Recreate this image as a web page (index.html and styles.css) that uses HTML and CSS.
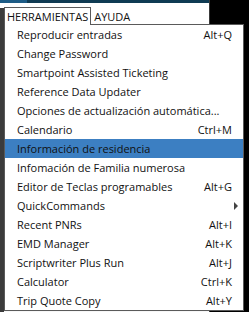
FILE: index.html
```html
<!DOCTYPE html>
<html>
<head>
<meta charset="utf-8">
<link rel="stylesheet" href="styles.css">
</head>
<body>
<div class="window">
  <div class="titlebar"><div class="titlebar-accent"></div></div>
  <div class="content">
    <div class="left-strip"></div>
    <div class="area">
      <div class="menubar">
        <div class="menu-title open">HERRAMIENTAS</div>
        <div class="menu-title">AYUDA</div>
      </div>
    </div>
  </div>
</div>
<div class="dropdown">
  <div class="item"><span>Reproducir entradas</span><span class="key">Alt+Q</span></div>
  <div class="item"><span>Change Password</span></div>
  <div class="item"><span>Smartpoint Assisted Ticketing</span></div>
  <div class="item"><span>Reference Data Updater</span></div>
  <div class="item"><span>Opciones de actualización automática...</span></div>
  <div class="item"><span>Calendario</span><span class="key">Ctrl+M</span></div>
  <div class="item active"><span>Información de residencia</span></div>
  <div class="item"><span>Infomación de Familia numerosa</span></div>
  <div class="item"><span>Editor de Teclas programables</span><span class="key">Alt+G</span></div>
  <div class="item"><span>QuickCommands</span><span class="arrow"></span></div>
  <div class="item"><span>Recent PNRs</span><span class="key">Alt+I</span></div>
  <div class="item"><span>EMD Manager</span><span class="key">Alt+K</span></div>
  <div class="item"><span>Scriptwriter Plus Run</span><span class="key">Alt+J</span></div>
  <div class="item"><span>Calculator</span><span class="key">Ctrl+K</span></div>
  <div class="item"><span>Trip Quote Copy</span><span class="key">Alt+Y</span></div>
</div>
</body>
</html>
```
FILE: styles.css
```css
html, body {
  margin: 0;
  padding: 0;
}
body {
  width: 249px;
  height: 312px;
  background: #000;
  overflow: hidden;
  position: relative;
  font-family: "Open Sans", "Noto Sans", sans-serif;
  font-size: 11px;
  color: #111;
}
.window {
  width: 209px;
  height: 312px;
  display: flex;
  flex-direction: column;
  border-right: 1px solid #3a3a3a;
}
.titlebar {
  height: 3px;
  background: #0f3b53;
  display: flex;
}
.titlebar-accent {
  width: 27px;
  background: #1d5c86;
}
.content {
  flex: 1;
  display: flex;
  background: #fff;
}
.left-strip {
  width: 4px;
  margin-top: 5px;
  background: #3b3b3b;
}
.area {
  flex: 1;
  background: #f7f7f7;
  display: flex;
  flex-direction: column;
}
.menubar {
  display: flex;
  padding-top: 4px;
  background: #fff;
  height: 17px;
}
.menu-title {
  height: 17px;
  line-height: 17px;
  padding: 0 2px;
  border: 1px solid transparent;
  border-bottom: none;
  white-space: nowrap;
}
.menu-title.open {
  border-color: #5a5a5a;
  background: #fff;
  position: relative;
  z-index: 2;
}
.dropdown {
  position: absolute;
  left: 4px;
  top: 24px;
  width: 238px;
  border: 1px solid #5a5a5a;
  background: #fff;
  z-index: 1;
}
.item {
  height: 19px;
  line-height: 19px;
  padding: 0 11px 0 12px;
  display: flex;
  justify-content: space-between;
  align-items: center;
  white-space: nowrap;
}
.item.active {
  background: #3c7fc2;
}
.arrow {
  width: 0;
  height: 0;
  border-left: 4px solid #444;
  border-top: 4px solid transparent;
  border-bottom: 4px solid transparent;
  margin-right: -6px;
}
```
